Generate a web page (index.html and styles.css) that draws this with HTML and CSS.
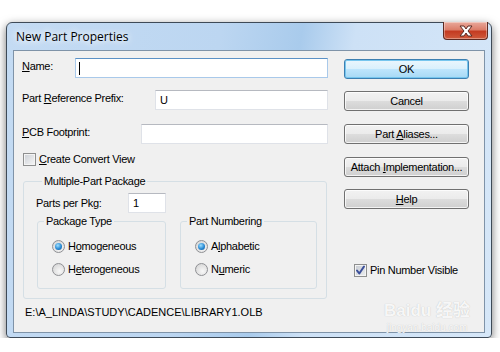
FILE: index.html
```html
<!DOCTYPE html>
<html lang="en">
<head>
    <meta charset="UTF-8">
    <title>New Part Properties</title>
    <link rel="stylesheet" href="styles.css">
</head>
<body>
    <div class="window">
        <div class="titlebar">
            <span class="title">New Part Properties</span>
            <span class="close-btn">
                <svg width="16" height="12" viewBox="0 0 16 12">
                    <path d="M2 1 H6 L8 4 L10 1 H14 L10 6 L14 11 H10 L8 8 L6 11 H2 L6 6 Z" fill="#fff" stroke="#5a2a22" stroke-width="1" stroke-linejoin="round"/>
                </svg>
            </span>
        </div>
        <div class="client">
            <div class="left">
                <div class="field">
                    <label><u>N</u>ame:</label>
                    <div class="textbox focused name-box"><span class="caret"></span></div>
                </div>
                <div class="field gap-12">
                    <label>Part <u>R</u>eference Prefix:</label>
                    <div class="textbox prefix-box">U</div>
                </div>
                <div class="field gap-14">
                    <label><u>P</u>CB Footprint:</label>
                    <div class="textbox pcb-box"></div>
                </div>
                <div class="check-row convert-row">
                    <span class="checkbox"></span>
                    <span><u>C</u>reate Convert View</span>
                </div>

                <fieldset class="group package-group">
                    <legend>Multiple-Part Package</legend>
                    <div class="pkg-row">
                        <label>Parts per Pk<u>g</u>:</label>
                        <div class="textbox pkg-box">1</div>
                    </div>
                    <div class="subgroups">
                        <fieldset class="group type-group">
                            <legend>Package Type</legend>
                            <div class="radio-row">
                                <span class="radio on"></span>
                                <span>H<u>o</u>mogeneous</span>
                            </div>
                            <div class="radio-row second">
                                <span class="radio"></span>
                                <span>H<u>e</u>terogeneous</span>
                            </div>
                        </fieldset>
                        <fieldset class="group numbering-group">
                            <legend>Part Numbering</legend>
                            <div class="radio-row">
                                <span class="radio on"></span>
                                <span>A<u>l</u>phabetic</span>
                            </div>
                            <div class="radio-row second">
                                <span class="radio"></span>
                                <span>N<u>u</u>meric</span>
                            </div>
                        </fieldset>
                    </div>
                </fieldset>

                <div class="path">E:\A_LINDA\STUDY\CADENCE\LIBRARY1.OLB</div>
            </div>

            <div class="right">
                <div class="btn default"><span>OK</span></div>
                <div class="btn gap-12"><span>Cancel</span></div>
                <div class="btn gap-13"><span>Part <u>A</u>liases...</span></div>
                <div class="btn gap-13"><span>Attach <u>I</u>mplementation...</span></div>
                <div class="btn gap-12"><span><u>H</u>elp</span></div>
                <div class="check-row pin-row">
                    <span class="checkbox checked">
                        <svg width="11" height="11" viewBox="0 0 11 11">
                            <path d="M2 5.5 L4.3 8.5 L9 1.5" fill="none" stroke="#3b4f9a" stroke-width="2" stroke-linecap="round" stroke-linejoin="round"/>
                        </svg>
                    </span>
                    <span>Pin Number Visible</span>
                </div>
            </div>
        </div>
    </div>

    <div class="watermark">
        <span class="wm-logo">Baidu 经验</span>
        <span class="wm-url">jingyan.baidu.com</span>
    </div>
</body>
</html>
```

FILE: styles.css
```css
body {
    margin: 0;
    background-color: #fff;
    font-family: "Liberation Sans", Arial, sans-serif;
    font-size: 11px;
    letter-spacing: -0.3px;
    color: #000;
}
u {
    text-decoration-thickness: 1px;
    text-underline-offset: 1px;
}

/* window frame */
.window {
    margin: 22px 0 0 6px;
    width: 486px;
    height: 316px;
    box-sizing: border-box;
    border: 1px solid #3e4a57;
    border-radius: 6px 6px 4px 4px;
    padding: 0 6px 4px 6px;
    background: linear-gradient(100deg, #c4dbf3 0%, #bcd6f1 40%, #a9cbec 55%, #cde1f6 65%, #d6e7f8 100%);
    box-shadow: 0 3px 10px rgba(0, 0, 0, 0.55);
}
.titlebar {
    height: 27px;
    display: flex;
    justify-content: space-between;
    align-items: flex-start;
}
.title {
    font-family: "Open Sans", "Noto Sans", sans-serif;
    font-size: 12px;
    letter-spacing: 0;
    margin: 5px 0 0 3px;
    color: #000;
    text-shadow: 0 0 6px #fff, 0 0 10px #fff;
}
.close-btn {
    width: 45px;
    height: 18px;
    margin: -1px -3px 0 0;
    box-sizing: border-box;
    border: 1px solid #5d2a22;
    border-top: none;
    border-radius: 0 0 4px 4px;
    background: linear-gradient(#e9a99b 0%, #dc7e6a 45%, #c43b22 55%, #cf5a3c 100%);
    box-shadow: inset 0 0 0 1px rgba(255, 255, 255, 0.35);
    display: flex;
    justify-content: center;
    align-items: center;
}

/* dialog body */
.client {
    height: 283px;
    box-sizing: border-box;
    border: 1px solid #7f93a8;
    background-color: #f0f0f0;
    display: flex;
}
.left {
    width: 306px;
    padding: 7px 0 0 8px;
}
.right {
    width: 125px;
    margin-left: 16px;
    padding-top: 8px;
}

.field {
    display: flex;
    justify-content: space-between;
    align-items: flex-start;
    height: 20px;
}
.field label {
    line-height: 13px;
    margin-top: 2px;
}
.gap-12 { margin-top: 12px; }
.gap-13 { margin-top: 13px; }
.gap-14 { margin-top: 14px; }

.textbox {
    height: 20px;
    box-sizing: border-box;
    background-color: #fff;
    border: 1px solid #dfe2e8;
    border-top-color: #b6b9c0;
    padding: 3px 0 0 4px;
    line-height: 13px;
    display: flex;
}
.textbox.focused {
    border-color: #a9c9ea;
    border-top-color: #5b91c6;
}
.name-box { width: 253px; padding-left: 3px; }
.prefix-box { width: 173px; }
.pcb-box { width: 187px; }
.pkg-box { width: 38px; }
.caret {
    width: 1px;
    height: 13px;
    background-color: #000;
}

/* checkboxes and radios */
.check-row {
    display: flex;
    align-items: center;
    gap: 3px;
    height: 13px;
    line-height: 13px;
}
.convert-row {
    margin: 9px 0 0 1px;
}
.pin-row {
    margin: 55px 0 0 10px;
}
.checkbox {
    width: 13px;
    height: 13px;
    box-sizing: border-box;
    border: 1px solid #8e8f8f;
    background: linear-gradient(135deg, #cbcfd5, #f7f7f7);
    box-shadow: inset 0 0 0 1px #f4f4f4;
    display: flex;
    justify-content: center;
    align-items: center;
}
.checkbox.checked {
    background: linear-gradient(135deg, #c7cbd2, #eceef0);
}
.radio-row {
    display: flex;
    align-items: center;
    gap: 3px;
    height: 13px;
    line-height: 13px;
    margin-left: 14px;
}
.radio-row.second {
    margin-top: 10px;
}
.radio {
    width: 13px;
    height: 13px;
    box-sizing: border-box;
    border-radius: 50%;
    border: 1px solid #8f9094;
    background: radial-gradient(circle at 60% 65%, #f8f8f8 0%, #dcdcdc 70%, #c9c9c9 100%);
    display: grid;
    place-items: center;
}
.radio.on::after {
    content: "";
    width: 7px;
    height: 7px;
    border-radius: 50%;
    background: radial-gradient(circle at 40% 35%, #9ee0ff 0%, #2a8ad4 55%, #0c4f8a 100%);
}

/* group boxes */
.group {
    margin: 0;
    border: 1px solid #d5dfe5;
    border-radius: 3px;
    min-inline-size: auto;
}
.group legend {
    padding: 0 2px;
    line-height: 13px;
}
.package-group {
    width: 304px;
    box-sizing: border-box;
    margin: 9px 0 0 1px;
    padding: 5px 0 9px 12px;
}
.package-group > legend {
    margin-left: 6px;
}
.pkg-row {
    display: flex;
    align-items: center;
    height: 20px;
}
.pkg-row label {
    width: 92px;
}
.subgroups {
    display: flex;
    gap: 14px;
    margin: 2px 0 0 1px;
}
.type-group {
    width: 129px;
    box-sizing: border-box;
    padding: 12px 0 12px 0;
}
.numbering-group {
    width: 137px;
    box-sizing: border-box;
    padding: 12px 0 12px 0;
}
.type-group legend,
.numbering-group legend {
    margin-left: 6px;
}

.path {
    margin: 7px 0 0 3px;
    line-height: 13px;
    letter-spacing: 0;
}

/* push buttons */
.btn {
    height: 20px;
    box-sizing: border-box;
    border: 1px solid #707070;
    border-radius: 3px;
    background: linear-gradient(#f2f2f2 0%, #ebebeb 50%, #dddddd 50%, #cfcfcf 100%);
    box-shadow: inset 0 0 0 1px rgba(255, 255, 255, 0.75);
    display: flex;
    justify-content: center;
    align-items: center;
    line-height: 13px;
}
.btn.default {
    border-color: #3c7fb1;
    background: linear-gradient(#eaf6fd 0%, #d9f0fc 50%, #bee6fd 50%, #a7d9f5 100%);
    box-shadow: inset 0 0 0 1px #76c6ee;
}

/* watermark on top of the screenshot */
.watermark {
    position: absolute;
    left: 384px;
    top: 300px;
    display: flex;
    flex-direction: column;
    align-items: center;
    color: rgba(255, 255, 255, 0.9);
    font-family: "Liberation Sans", "Noto Sans CJK SC", sans-serif;
    letter-spacing: 0;
    text-shadow: 0 0 1px #b9b9b9;
}
.wm-logo {
    font-size: 17px;
    font-weight: bold;
    line-height: 22px;
}
.wm-url {
    font-size: 10px;
    line-height: 12px;
}
```
